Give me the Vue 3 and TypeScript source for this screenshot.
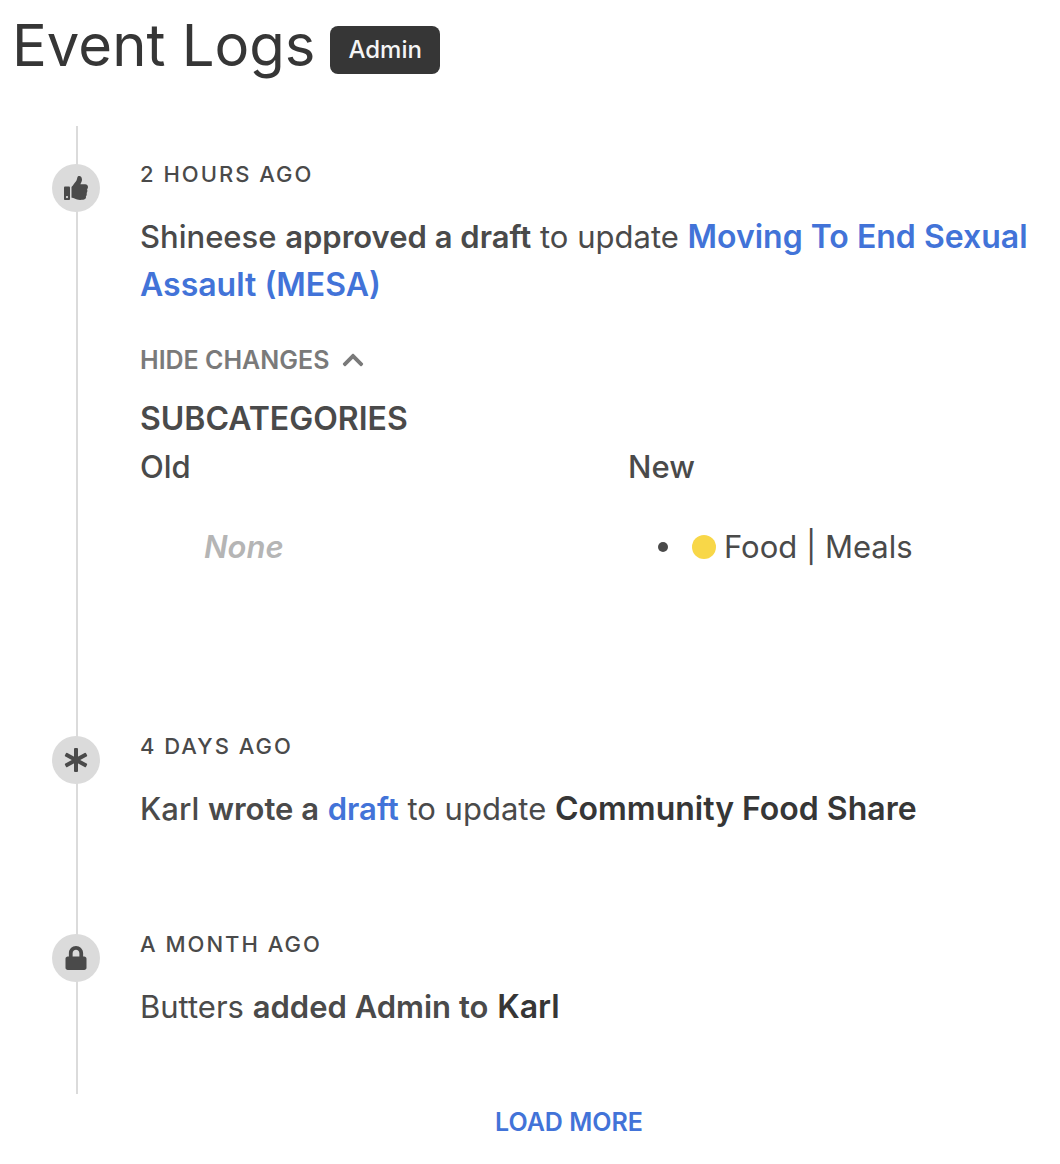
<script setup lang="ts">
import { ref } from 'vue'

const showChanges = ref(true)
</script>

<template>
  <main class="page">
    <header class="header">
      <h1 class="title">Event Logs</h1>
      <span class="tag">Admin</span>
    </header>

    <ol class="timeline">
      <li class="event">
        <span class="marker">
          <svg width="24" height="24" viewBox="0 0 512 512" aria-hidden="true">
            <path d="M104 224H24c-13.255 0-24 10.745-24 24v240c0 13.255 10.745 24 24 24h80c13.255 0 24-10.745 24-24V248c0-13.255-10.745-24-24-24zM64 472c-13.255 0-24-10.745-24-24s10.745-24 24-24 24 10.745 24 24-10.745 24-24 24zM384 81.452c0 42.416-25.97 66.208-33.277 94.548h101.723c33.397 0 59.397 27.746 59.553 58.098.084 17.938-7.546 37.249-19.439 49.197l-.11.11c9.836 23.337 8.237 56.037-9.308 79.469 8.681 25.895-.069 57.704-16.382 74.757 4.298 17.598 2.244 32.575-6.148 44.632C440.202 511.587 389.616 512 346.839 512l-2.845-.001c-48.287-.017-87.806-17.598-119.56-31.725-15.957-7.099-36.821-15.887-52.651-16.178-6.54-.12-11.783-5.457-11.783-11.998v-213.77c0-3.2 1.282-6.271 3.558-8.521 39.614-39.144 56.648-80.587 89.117-113.111 14.804-14.832 20.188-37.236 25.393-58.902C282.515 39.293 291.817 0 312 0c24 0 72 8 72 81.452z" />
          </svg>
        </span>
        <div class="content">
          <p class="time">2 hours ago</p>
          <p class="summary">
            <span class="medium">Shineese</span> <strong class="semi">approved a draft</strong> to update
            <a class="subject" href="#mesa">Moving To End Sexual Assault (MESA)</a>
          </p>
          <button class="toggle" type="button" :aria-expanded="showChanges" @click="showChanges = !showChanges">
            {{ showChanges ? 'Hide' : 'Show' }} changes
            <svg :class="{ flipped: !showChanges }" width="24" height="24" viewBox="-32 0 512 512" aria-hidden="true">
              <path d="M240.971 130.524l194.343 194.343c9.373 9.373 9.373 24.569 0 33.941l-22.667 22.667c-9.357 9.357-24.522 9.375-33.901.04L224 227.495 69.255 381.516c-9.379 9.335-24.544 9.317-33.901-.04l-22.667-22.667c-9.373-9.373-9.373-24.569 0-33.941L207.03 130.525c9.372-9.373 24.568-9.373 33.941-.001z" />
            </svg>
          </button>
          <section v-if="showChanges" class="changes">
            <h2 class="field">Subcategories</h2>
            <div class="columns">
              <div>
                <h3 class="side">Old</h3>
                <p class="none">None</p>
              </div>
              <div>
                <h3 class="side">New</h3>
                <ul class="values">
                  <li class="value"><span class="dot"></span>Food | Meals</li>
                </ul>
              </div>
            </div>
          </section>
        </div>
      </li>

      <li class="event">
        <span class="marker">
          <svg width="24" height="24" viewBox="0 0 24 24" aria-hidden="true">
            <rect x="10" y="0" width="4" height="24" rx="1" />
            <rect x="10" y="0" width="4" height="24" rx="1" transform="rotate(61 12 12)" />
            <rect x="10" y="0" width="4" height="24" rx="1" transform="rotate(-61 12 12)" />
          </svg>
        </span>
        <div class="content">
          <p class="time">4 days ago</p>
          <p class="summary">
            <span class="medium">Karl</span> <strong class="semi">wrote a</strong>
            {{ ' ' }}<a class="semi" href="#draft">draft</a> to update
            <strong class="subject dark">Community Food Share</strong>
          </p>
        </div>
      </li>

      <li class="event">
        <span class="marker">
          <svg width="24" height="24" viewBox="-32 0 512 512" aria-hidden="true">
            <path d="M400 224h-24v-72C376 68.2 307.8 0 224 0S72 68.2 72 152v72H48c-26.5 0-48 21.5-48 48v192c0 26.5 21.5 48 48 48h352c26.5 0 48-21.5 48-48V272c0-26.5-21.5-48-48-48zm-104 0H152v-72c0-39.7 32.3-72 72-72s72 32.3 72 72v72z" />
          </svg>
        </span>
        <div class="content">
          <p class="time">a month ago</p>
          <p class="summary">
            Butters <strong class="semi">added Admin to</strong> {{ ' ' }}<strong class="subject dark">Karl</strong>
          </p>
        </div>
      </li>
    </ol>

    <footer class="footer">
      <button class="more" type="button">Load more</button>
    </footer>
  </main>
</template>

<style>
body {
  margin: 0;
  background: #fff;
}
</style>

<style scoped>
.page {
  color: #4a4a4a;
  font-family: Inter, "Liberation Sans", sans-serif;
  font-size: 31px;
  line-height: 48px;
}

h1,
h2,
h3,
p,
ol,
ul {
  margin: 0;
  padding: 0;
  font-size: inherit;
}

a {
  color: #4273d8;
  text-decoration: none;
}

button {
  border: 0;
  background: none;
  font-family: inherit;
  font-size: 25px;
  font-weight: 600;
  text-transform: uppercase;
  cursor: pointer;
}

.header {
  display: flex;
  align-items: center;
  gap: 15px;
  padding: 9px 12px 35px;
}

.title {
  padding-bottom: 10px;
  color: #363636;
  font-size: 58px;
  font-weight: 400;
  line-height: 72px;
}

.tag {
  padding: 0 18px;
  border-radius: 8px;
  background: #363636;
  color: #f5f5f5;
  font-size: 24px;
  font-weight: 500;
}

.timeline {
  margin-left: 76px;
  padding-top: 38px;
  border-left: 2px solid #dbdbdb;
  list-style: none;
}

.event {
  display: grid;
  grid-template-columns: 48px minmax(0, 1fr);
  column-gap: 40px;
  margin-left: -26px;
  padding: 0 16px 101px 0;
}

.event:last-child {
  padding-bottom: 63px;
}

.marker {
  display: flex;
  align-items: center;
  justify-content: center;
  width: 48px;
  height: 48px;
  border-radius: 50%;
  background: #dbdbdb;
}

svg {
  fill: currentColor;
}

.time {
  margin-bottom: 29px;
  font-size: 22px;
  font-weight: 500;
  line-height: 20px;
  letter-spacing: 2px;
  text-transform: uppercase;
}

.medium {
  font-weight: 500;
}

.semi {
  font-weight: 600;
}

.subject,
.field {
  font-size: 32px;
  font-weight: 600;
}

.dark {
  color: #363636;
}

.toggle {
  display: flex;
  align-items: center;
  gap: 12px;
  margin-top: 39px;
  padding: 0;
  color: #7a7a7a;
  line-height: 24px;
}

.flipped {
  transform: rotate(180deg);
}

.changes {
  margin: 23px 0 64px;
}

.field {
  text-transform: uppercase;
}

.columns {
  display: grid;
  grid-template-columns: 1fr 1fr;
  column-gap: 72px;
}

.side {
  margin-bottom: 32px;
  font-weight: 500;
}

.none {
  padding-left: 64px;
  color: #b5b5b5;
  font-style: italic;
  font-weight: 600;
}

.values {
  padding-left: 30px;
  list-style: none;
}

.value {
  display: flex;
  align-items: center;
}

.value::before {
  width: 10px;
  height: 10px;
  margin-right: 24px;
  border-radius: 50%;
  background: currentColor;
  content: "";
}

.dot {
  width: 24px;
  height: 24px;
  margin-right: 8px;
  border-radius: 50%;
  background: #f8d748;
}

.footer {
  display: flex;
  justify-content: center;
  margin-left: 78px;
}

.more {
  padding: 0 24px;
  color: #4273d8;
  line-height: 56px;
}
</style>
